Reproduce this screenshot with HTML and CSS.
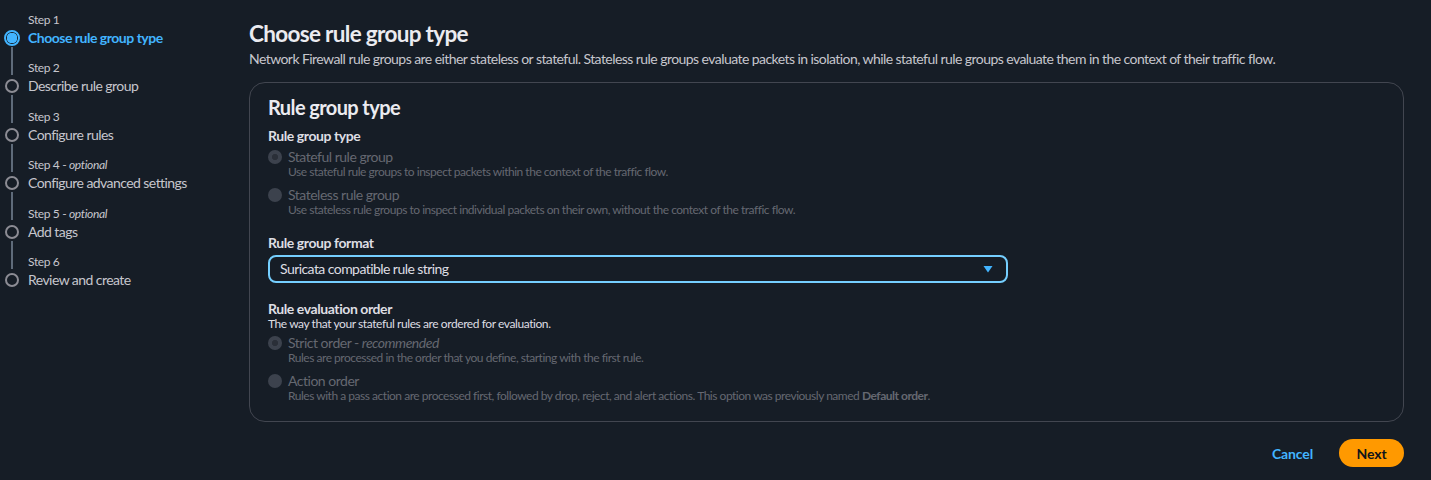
FILE: index.html
```html
<!DOCTYPE html>
<html lang="en">
<head>
<meta charset="utf-8">
<title>Create rule group</title>
<link rel="stylesheet" href="styles.css">
</head>
<body>
<div class="layout">
  <nav class="steps">
    <div class="step active">
      <div class="step-label">Step 1</div>
      <div class="step-title"><span class="dot"></span>Choose rule group type</div>
    </div>
    <div class="step">
      <div class="step-label">Step 2</div>
      <div class="step-title"><span class="dot"></span>Describe rule group</div>
    </div>
    <div class="step">
      <div class="step-label">Step 3</div>
      <div class="step-title"><span class="dot"></span>Configure rules</div>
    </div>
    <div class="step">
      <div class="step-label">Step 4 - <i>optional</i></div>
      <div class="step-title"><span class="dot"></span>Configure advanced settings</div>
    </div>
    <div class="step">
      <div class="step-label">Step 5 - <i>optional</i></div>
      <div class="step-title"><span class="dot"></span>Add tags</div>
    </div>
    <div class="step last">
      <div class="step-label">Step 6</div>
      <div class="step-title"><span class="dot"></span>Review and create</div>
    </div>
  </nav>
  <main class="main">
    <header class="page-head">
      <h1>Choose rule group type</h1>
      <p class="page-desc">Network Firewall rule groups are either stateless or stateful. Stateless rule groups evaluate packets in isolation, while stateful rule groups evaluate them in the context of their traffic flow.</p>
    </header>
    <section class="card">
      <h2>Rule group type</h2>
      <div class="field first">
        <div class="field-label">Rule group type</div>
        <div class="radio checked">
          <span class="radio-circle"></span>
          <div class="radio-text">
            <div class="radio-label">Stateful rule group</div>
            <div class="radio-desc">Use stateful rule groups to inspect packets within the context of the traffic flow.</div>
          </div>
        </div>
        <div class="radio">
          <span class="radio-circle"></span>
          <div class="radio-text">
            <div class="radio-label">Stateless rule group</div>
            <div class="radio-desc">Use stateless rule groups to inspect individual packets on their own, without the context of the traffic flow.</div>
          </div>
        </div>
      </div>
      <div class="field format">
        <div class="field-label">Rule group format</div>
        <div class="select">
          <span class="select-value">Suricata compatible rule string</span>
          <svg class="caret" width="12" height="12" viewBox="0 0 12 12"><path d="M1.5 3h9L6 9.5z" fill="#42b4ff"/></svg>
        </div>
      </div>
      <div class="field order">
        <div class="field-label">Rule evaluation order</div>
        <div class="field-desc">The way that your stateful rules are ordered for evaluation.</div>
        <div class="radio checked">
          <span class="radio-circle"></span>
          <div class="radio-text">
            <div class="radio-label">Strict order - <i>recommended</i></div>
            <div class="radio-desc">Rules are processed in the order that you define, starting with the first rule.</div>
          </div>
        </div>
        <div class="radio">
          <span class="radio-circle"></span>
          <div class="radio-text">
            <div class="radio-label">Action order</div>
            <div class="radio-desc">Rules with a pass action are processed first, followed by drop, reject, and alert actions. This option was previously named <b>Default order</b>.</div>
          </div>
        </div>
      </div>
    </section>
    <div class="actions">
      <button class="btn-link">Cancel</button>
      <button class="btn-primary">Next</button>
    </div>
  </main>
</div>
</body>
</html>
```
FILE: styles.css
```css
* { box-sizing: border-box; }
html, body { margin: 0; padding: 0; }
body {
  background: #161d26;
  color: #dedee3;
  font-family: Lato, "Open Sans", sans-serif;
  font-size: 14px;
  line-height: 20px;
  width: 1431px;
  height: 480px;
  overflow: hidden;
}
.layout {
  display: grid;
  grid-template-columns: 249px 1fr;
  padding-right: 27px;
}

/* ---- wizard steps ---- */
.steps {
  padding-top: 12px;
  display: flex;
  flex-direction: column;
}
.step {
  position: relative;
  padding-left: 28px;
  height: 48.4px;
}
.step-label {
  font-size: 12px;
  line-height: 16px;
  letter-spacing: -0.03em;
  color: #c6c6cd;
}
.step-label i { font-style: italic; }
.step-title {
  position: relative;
  font-size: 14px;
  line-height: 20px;
  letter-spacing: -0.04em;
  color: #c6c6cd;
}
.dot {
  position: absolute;
  left: -23px;
  top: 3px;
  width: 14px;
  height: 14px;
  border: 2px solid #8c8c94;
  border-radius: 50%;
}
.step::after {
  content: "";
  position: absolute;
  left: 11px;
  top: 35px;
  width: 2px;
  height: 28px;
  background: #5f6b7a;
}
.step.last::after { display: none; }
.step.active .step-title { color: #42b4ff; font-weight: 700; letter-spacing: -0.035em; }
.step.active .dot {
  left: -24px;
  top: 2px;
  width: 16px;
  height: 16px;
  border-color: #42b4ff;
  background: radial-gradient(circle, #42b4ff 0 5px, #161d26 5.5px);
}

/* ---- main ---- */
.main {
  padding-top: 19px;
}
h1 {
  margin: 0;
  font-size: 22.5px;
  line-height: 30px;
  font-weight: 700;
  letter-spacing: -0.03em;
  color: #ebebf0;
}
.page-desc {
  margin: 0;
  font-size: 14px;
  line-height: 20px;
  letter-spacing: -0.04em;
  color: #c6c6cd;
}
.card {
  margin-top: 13px;
  border: 1px solid #424650;
  border-radius: 16px;
  padding: 12px 18px 16px;
  height: 340px;
}
h2 {
  margin: 0;
  font-size: 20px;
  line-height: 24px;
  font-weight: 700;
  letter-spacing: -0.03em;
  color: #ebebf0;
}
.field.first { margin-top: 7px; }
.field.format { margin-top: 17px; }
.field.order { margin-top: 16px; }
.field-label {
  font-weight: 700;
  font-size: 14px;
  line-height: 20px;
  letter-spacing: -0.03em;
  color: #dedee3;
}
.field-desc {
  margin-top: -2px;
  font-size: 12px;
  line-height: 14px;
  letter-spacing: -0.035em;
  color: #dedee3;
}
.radio {
  display: flex;
  gap: 6px;
  margin-top: 2px;
}
.order .radio { margin-top: 3px; }
.radio + .radio, .order .radio + .radio { margin-top: 8px; }
.radio-circle {
  flex: none;
  width: 14px;
  height: 14px;
  margin-top: 2px;
  border-radius: 50%;
  background: #3c424d;
}
.radio.checked .radio-circle {
  background: radial-gradient(circle, #2a2f38 0 2.8px, #3c424d 3.4px);
}
.radio-label {
  font-size: 14px;
  line-height: 18px;
  letter-spacing: -0.035em;
  color: #656871;
}
.radio-desc {
  font-size: 12px;
  line-height: 12px;
  letter-spacing: -0.04em;
  color: #656871;
}
.radio-desc b { font-weight: 700; }
.select {
  margin-top: 2px;
  width: 740px;
  height: 28px;
  border: 2px solid #75cfff;
  border-radius: 8px;
  display: flex;
  align-items: center;
  justify-content: space-between;
  padding: 0 12px 0 10px;
  color: #dedee3;
}
.select-value { letter-spacing: -0.04em; }
.caret { display: block; }

/* ---- actions ---- */
.actions {
  display: flex;
  justify-content: flex-end;
  align-items: center;
  gap: 26px;
  margin-top: 17px;
}
button {
  font-family: inherit;
  font-weight: 700;
  font-size: 14px;
  letter-spacing: -0.01em;
  border: none;
  cursor: pointer;
}
.btn-link {
  background: none;
  color: #42b4ff;
  padding: 4px 0;
}
.btn-primary {
  background: #ff9900;
  color: #0f141a;
  border-radius: 20px;
  height: 28px;
  width: 65px;
  padding: 0;
}
```
